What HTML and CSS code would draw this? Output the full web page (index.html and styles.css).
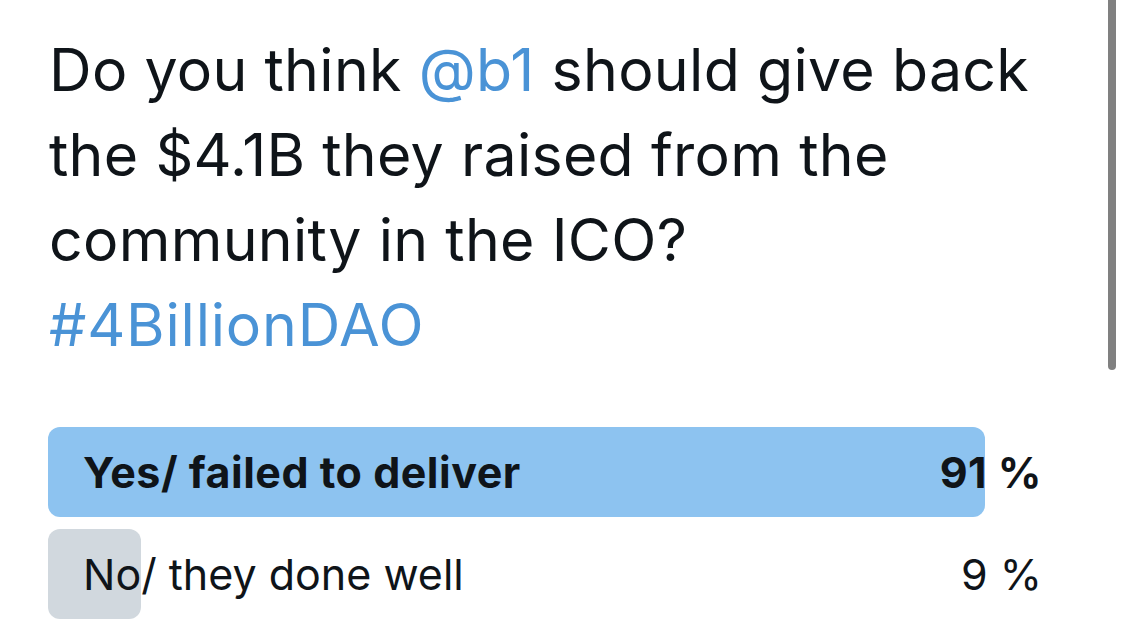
FILE: index.html
```html
<!DOCTYPE html>
<html>
<head>
<meta charset="utf-8">
<link rel="stylesheet" href="styles.css">
</head>
<body>
<div class="page">
  <main class="tweet">
    <p class="question">Do you think <span class="link">@b1</span> should give back the $4.1B they raised from the community in the ICO? <span class="link tag">#4BillionDAO</span></p>
    <div class="poll">
      <div class="option winner">
        <div class="fill" style="width:91%"></div>
        <span class="label">Yes/ failed to deliver</span>
        <span class="pct">91 %</span>
      </div>
      <div class="option">
        <div class="fill" style="width:9%"></div>
        <span class="label">No/ they done well</span>
        <span class="pct">9 %</span>
      </div>
    </div>
  </main>
  <div class="scrollbar"></div>
</div>
</body>
</html>
```
FILE: styles.css
```css
* { box-sizing: border-box; }
html, body { margin: 0; padding: 0; background: #fff; }
body {
  font-family: Inter, "Noto Sans", "Liberation Sans", sans-serif;
  color: #0f1419;
  width: 1125px;
  height: 636px;
  overflow: hidden;
}
.page {
  position: relative;
  height: 636px;
}
.tweet {
  padding: 27px 0 0 48px;
  width: 1078px;
}
.question {
  margin: 0;
  font-size: 59px;
  line-height: 85px;
  font-weight: 400;
  letter-spacing: 0.3px;
  padding-left: 1px;
  width: 1010px;
}
.link { color: #4a93d6; }
.tag { display: block; letter-spacing: 0.8px; }
.poll {
  margin-top: 60px;
  display: flex;
  flex-direction: column;
  gap: 12px;
}
.option {
  position: relative;
  height: 90px;
  display: flex;
  align-items: center;
  justify-content: space-between;
  padding: 0 36px 0 35px;
  font-size: 43px;
  letter-spacing: 0;
}
.fill {
  position: absolute;
  left: 0; top: 0; bottom: 0;
  background: #d1d8de;
  border-radius: 12px;
}
.winner .fill { background: #8dc3f0; }
.winner { font-weight: 700; letter-spacing: 0.5px; }
.label, .pct { position: relative; }
.scrollbar {
  position: absolute;
  right: 9px;
  top: 0;
  width: 8px;
  height: 370px;
  background: #808080;
  border-radius: 0 0 4px 4px;
}
```
